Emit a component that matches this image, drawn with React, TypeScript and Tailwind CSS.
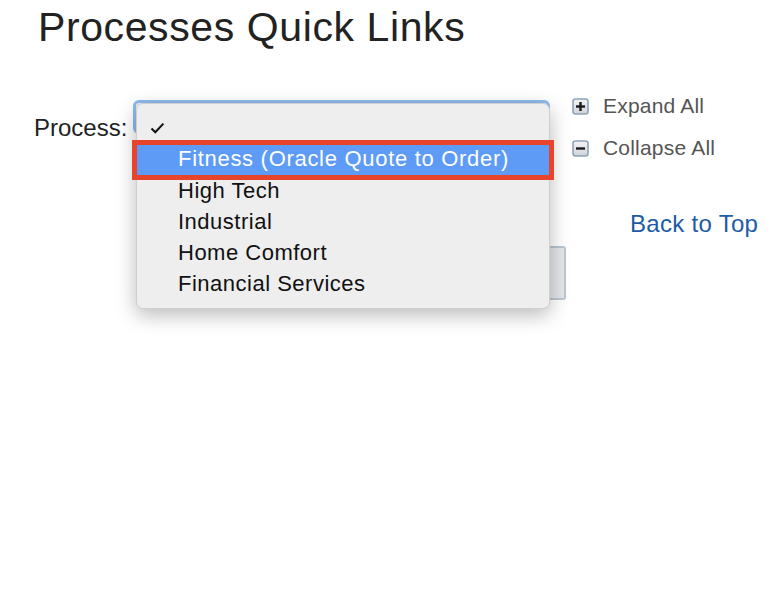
import React from "react";

function BoxIcon({ minus }: { minus?: boolean }) {
  return (
    <svg width="17" height="17" viewBox="0 0 17 17" className="shrink-0">
      <defs>
        <linearGradient id={minus ? "gm" : "gp"} x1="0" y1="0" x2="0" y2="1">
          <stop offset="0" stopColor="#f4f5f7" />
          <stop offset="1" stopColor="#cfd3d8" />
        </linearGradient>
      </defs>
      <rect x="1" y="1" width="15" height="15" rx="2.5" fill={`url(#${minus ? "gm" : "gp"})`} stroke="#8fa3b8" strokeWidth="1.6" />
      <rect x="4" y="7.3" width="9" height="2.4" fill="#1a1a1a" />
      {!minus && <rect x="7.3" y="4" width="2.4" height="9" fill="#1a1a1a" />}
    </svg>
  );
}

export default function App() {
  const items = ["High Tech", "Industrial", "Home Comfort", "Financial Services"];
  return (
    <div className="w-[778px] h-[602px] bg-white relative overflow-hidden" style={{ fontFamily: '"Liberation Sans", Arial, sans-serif' }}>
      <h1 className="pl-[38px] pt-[4px] text-[41px] leading-[46px] text-[#222] tracking-[0.6px]">Processes Quick Links</h1>
      <div className="flex mt-[50px]">
        <div className="pl-[34px] pt-[14px] text-[24px] leading-[28px] text-[#222] w-[133px]">Process:</div>
        <div className="relative w-[417px]">
          <div className="h-[34px] rounded-[6px] border-[3px] border-[#8fbaf0] bg-[#f0f0f0]" />
          <div className="absolute left-[415px] top-[146px] w-[18px] h-[54px] rounded-r-[3px] border-2 border-l-0 border-[#bcc6d1] bg-[#e4e6e9]" />
          <div className="absolute left-[3px] top-[3px] w-[414px] pt-[10px] pb-[9px] rounded-[7px] bg-[#eeeeee] border border-[#cfcfcf] shadow-[0_6px_20px_rgba(0,0,0,0.28)] text-[22px] leading-[31px] text-[#111] tracking-[0.5px]">
            <div className="h-[31px] pl-[13px] pt-[7px] flex items-start">
              <svg width="15" height="14" viewBox="0 0 15 14">
                <path d="M1.5 7.5 L5.3 11.3 L13.4 2.6" fill="none" stroke="#111" strokeWidth="2" />
              </svg>
            </div>
            <div className="h-[30px] outline-[5px] outline-solid outline-[#e8432b] bg-[#5d9bf6] text-white pl-[41px] leading-[28px] tracking-[0.7px]">
              Fitness (Oracle Quote to Order)
            </div>
            {items.map((t) => (
              <div key={t} className="pl-[41px] h-[31px]">{t}</div>
            ))}
          </div>
        </div>
        <div className="ml-[22px] text-[21px] leading-[24px] text-[#555] tracking-[0.2px] -mt-[6px]">
          <div className="flex items-center gap-[14px] h-[24px]">
            <BoxIcon />
            <span>Expand All</span>
          </div>
          <div className="flex items-center gap-[14px] h-[24px] mt-[18px]">
            <BoxIcon minus />
            <span>Collapse All</span>
          </div>
          <div className="mt-[50px] pl-[58px] text-[24px] leading-[28px] text-[#1d5ba6] tracking-[0.3px] whitespace-nowrap">Back to Top</div>
        </div>
      </div>
    </div>
  );
}
